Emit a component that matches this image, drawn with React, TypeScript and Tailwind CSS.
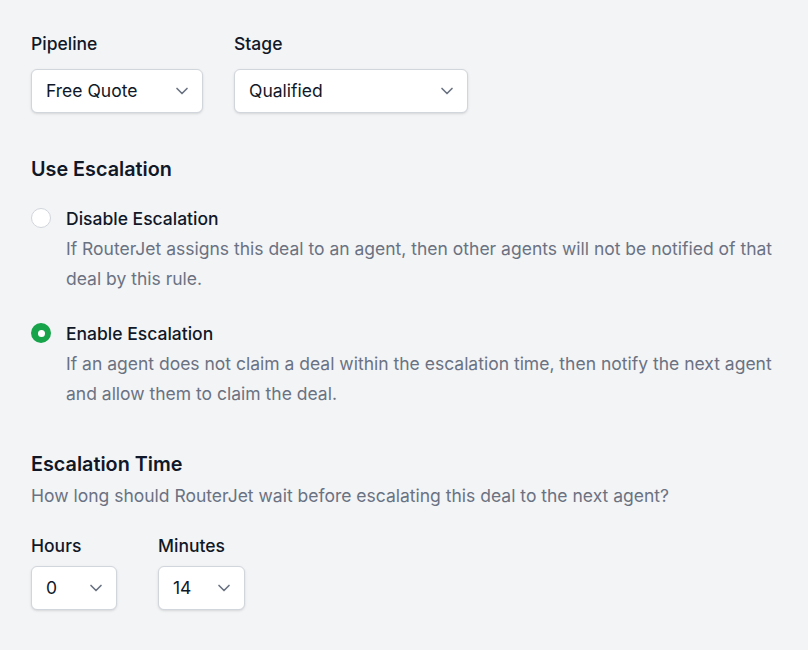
import { ChevronDown } from 'lucide-react'
import clsx from 'clsx'

function SelectBox({ value, className }: { value: string; className?: string }) {
  return (
    <div
      className={clsx(
        'flex h-[44px] items-center justify-between rounded-md border border-gray-300 bg-white pl-[14px] pr-[10px] text-[17.5px] text-gray-900 shadow-sm',
        className
      )}
    >
      <span className="pt-px">{value}</span>
      <ChevronDown size={20} strokeWidth={2} className="text-gray-500" />
    </div>
  )
}

function Radio({ checked }: { checked?: boolean }) {
  return checked ? (
    <span className="flex h-5 w-5 shrink-0 items-center justify-center rounded-full bg-[#16a34a]">
      <span className="block h-[7px] w-[7px] rounded-full bg-white" />
    </span>
  ) : (
    <span className="block h-5 w-5 shrink-0 rounded-full border border-gray-300 bg-white" />
  )
}

function Option({ title, desc, checked }: { title: string; desc: string; checked?: boolean }) {
  return (
    <div className="flex gap-[15px]">
      <div className="pt-[2px]">
        <Radio checked={checked} />
      </div>
      <div>
        <div className="pt-px text-[17.5px] font-medium leading-6 text-gray-900">{title}</div>
        <p className="mt-[3px] text-[17.5px] leading-[30px] text-gray-500">{desc}</p>
      </div>
    </div>
  )
}

export default function App() {
  return (
    <div className="min-h-[650px] bg-[#f3f4f6] px-[31px] pt-8 font-['Inter',sans-serif]">
      <div className="flex gap-[31px]">
        <div>
          <div className="text-[17.5px] font-medium leading-6 text-gray-900">Pipeline</div>
          <SelectBox value="Free Quote" className="mt-[13px] w-[172px]" />
        </div>
        <div>
          <div className="text-[17.5px] font-medium leading-6 text-gray-900">Stage</div>
          <SelectBox value="Qualified" className="mt-[13px] w-[234px]" />
        </div>
      </div>

      <h2 className="mt-[42px] text-[19.8px] font-semibold leading-7 text-gray-900">Use Escalation</h2>
      <div className="mt-[23px] flex flex-col gap-[27px]">
        <Option
          title="Disable Escalation"
          desc="If RouterJet assigns this deal to an agent, then other agents will not be notified of that deal by this rule."
        />
        <Option
          checked
          title="Enable Escalation"
          desc="If an agent does not claim a deal within the escalation time, then notify the next agent and allow them to claim the deal."
        />
      </div>

      <h2 className="mt-[41px] text-[19.8px] font-semibold leading-7 text-gray-900">Escalation Time</h2>
      <p className="mt-[6px] text-[17.5px] leading-6 text-gray-500">
        How long should RouterJet wait before escalating this deal to the next agent?
      </p>
      <div className="mt-[26px] flex gap-[41px]">
        <div>
          <div className="text-[17.5px] font-medium leading-6 text-gray-900">Hours</div>
          <SelectBox value="0" className="mt-[8px] w-[86px]" />
        </div>
        <div>
          <div className="text-[17.5px] font-medium leading-6 text-gray-900">Minutes</div>
          <SelectBox value="14" className="mt-[8px] w-[87px]" />
        </div>
      </div>
    </div>
  )
}
